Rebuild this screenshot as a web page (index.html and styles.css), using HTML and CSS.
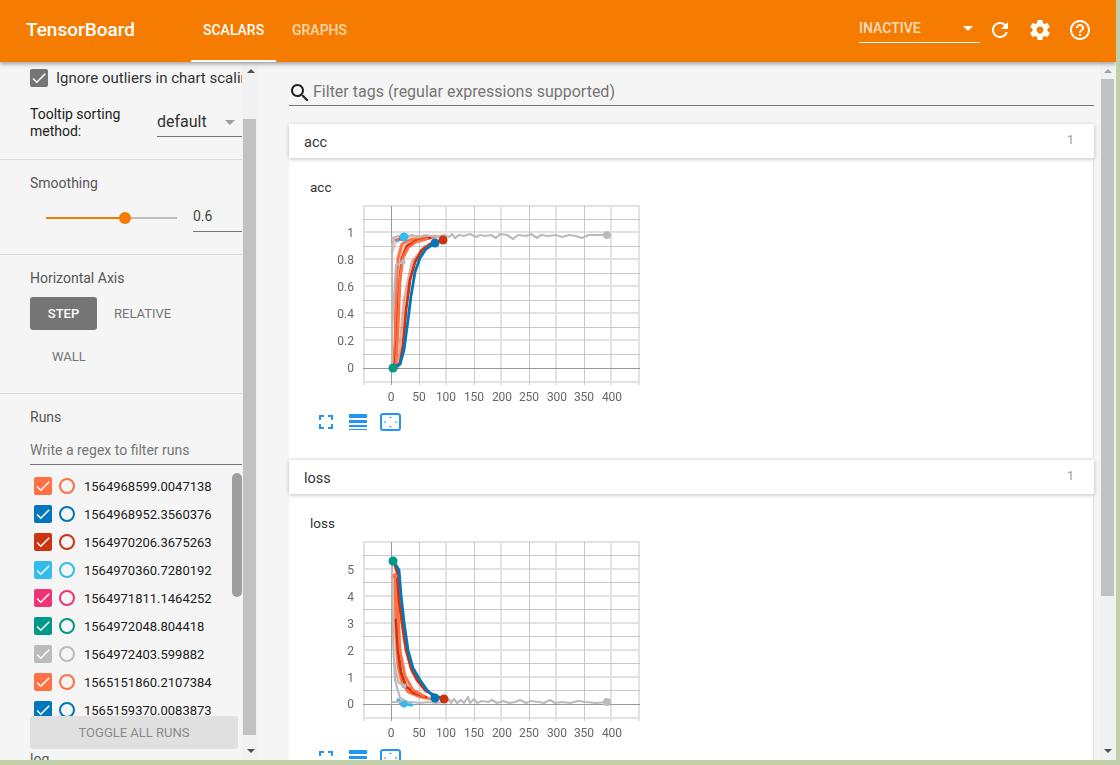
FILE: index.html
```html
<!DOCTYPE html>
<html lang="en">
<head>
<meta charset="utf-8">
<title>TensorBoard</title>
<link rel="stylesheet" href="styles.css">
</head>
<body>
<svg class="defs" width="0" height="0" aria-hidden="true">
  <symbol id="check" viewBox="0 0 24 24"><path d="M9 16.2L4.8 12l-1.4 1.4L9 19 21 7l-1.4-1.4z"/></symbol>
  <symbol id="fullscreen" viewBox="0 0 24 24"><path d="M7 14H5v5h5v-2H7v-3zm-2-4h2V7h3V5H5v5zm12 7h-3v2h5v-5h-2v3zM14 5v2h3v3h2V5h-5z"/></symbol>
  <symbol id="lines" viewBox="0 0 24 24"><path d="M3 4h18v4H3zM3 10h18v3H3zM3 15h18v2H3zM3 19h18v1H3z"/></symbol>
  <symbol id="fit" viewBox="0 0 24 24"><rect class="fit-box" x="3" y="4" width="19" height="16" rx="2"/><path class="fit-arrows" d="M12.500 6.500l1.500 1.500h-3zM12.500 17.500l1.500-1.500h-3zM6 12l1.500-1.500v3zM19 12l-1.500-1.500v3z"/></symbol>
</svg>
<div class="app">
  <header class="topbar">
    <div class="brand">TensorBoard</div>
    <nav class="tabs">
      <div class="tab active">SCALARS</div>
      <div class="tab">GRAPHS</div>
    </nav>
    <div class="spacer"></div>
    <div class="inactive"><span>INACTIVE</span><i class="caret caret-white"></i></div>
    <div class="top-icons">
      <svg class="top-icon" viewBox="0 0 24 24"><path d="M17.65 6.35C16.2 4.9 14.21 4 12 4c-4.42 0-7.99 3.58-7.99 8s3.57 8 7.99 8c3.73 0 6.84-2.55 7.73-6h-2.08c-.82 2.33-3.04 4-5.65 4-3.31 0-6-2.69-6-6s2.69-6 6-6c1.66 0 3.14.69 4.22 1.78L13 11h7V4l-2.35 2.35z"/></svg>
      <svg class="top-icon" viewBox="0 0 24 24"><path d="M19.43 12.98c.04-.32.07-.64.07-.98s-.03-.66-.07-.98l2.11-1.65c.19-.15.24-.42.12-.64l-2-3.46c-.12-.22-.39-.3-.61-.22l-2.49 1c-.52-.4-1.08-.73-1.69-.98l-.38-2.65C14.46 2.18 14.25 2 14 2h-4c-.25 0-.46.18-.49.42l-.38 2.65c-.61.25-1.17.59-1.69.98l-2.49-1c-.23-.09-.49 0-.61.22l-2 3.46c-.13.22-.07.49.12.64l2.11 1.65c-.04.32-.07.65-.07.98s.03.66.07.98l-2.11 1.65c-.19.15-.24.42-.12.64l2 3.46c.12.22.39.3.61.22l2.49-1c.52.4 1.08.73 1.69.98l.38 2.65c.03.24.24.42.49.42h4c.25 0 .46-.18.49-.42l.38-2.65c.61-.25 1.17-.59 1.69-.98l2.49 1c.23.09.49 0 .61-.22l2-3.46c.12-.22.07-.49-.12-.64l-2.11-1.65zM12 15.5c-1.93 0-3.5-1.57-3.5-3.5s1.57-3.5 3.5-3.5 3.5 1.57 3.5 3.5-1.57 3.5-3.5 3.5z"/></svg>
      <svg class="top-icon" viewBox="0 0 24 24"><path d="M11 18h2v-2h-2v2zm1-16C6.48 2 2 6.48 2 12s4.48 10 10 10 10-4.48 10-10S17.52 2 12 2zm0 18c-4.41 0-8-3.59-8-8s3.59-8 8-8 8 3.59 8 8-3.59 8-8 8zm0-14c-2.21 0-4 1.79-4 4h2c0-1.1.9-2 2-2s2 .9 2 2c0 2-3 1.75-3 5h2c0-2.25 3-2.5 3-5 0-2.21-1.79-4-4-4z"/></svg>
    </div>
  </header>

  <div class="workspace">
    <aside class="sidebar">
      <div class="side-content">
        <section class="side-section sec-options">
          <div class="ignore-row">
            <span class="box box-grey"><svg class="check"><use href="#check"/></svg></span>
            <span class="ignore-text">Ignore outliers in chart scaling</span>
          </div>
          <div class="tooltip-row">
            <div class="tooltip-label">Tooltip sorting method:</div>
            <div class="select"><span>default</span><i class="caret caret-grey"></i></div>
          </div>
        </section>
        <section class="side-section sec-smooth">
          <div class="side-label">Smoothing</div>
          <div class="smooth-row">
            <div class="slider"><div class="slider-fill"></div><div class="slider-knob"></div></div>
            <div class="smooth-value">0.6</div>
          </div>
        </section>
        <section class="side-section sec-axis">
          <div class="side-label">Horizontal Axis</div>
          <div class="axis-buttons">
            <div class="axis-btn selected">STEP</div>
            <div class="axis-btn">RELATIVE</div>
            <div class="axis-btn wall">WALL</div>
          </div>
        </section>
        <section class="sec-runs">
          <div class="side-label">Runs</div>
          <div class="regex">Write a regex to filter runs</div>
          <div class="run-list">
            <div class="run c-orange"><span class="box"><svg class="check"><use href="#check"/></svg></span><i class="ring"></i><span class="run-name">1564968599.0047138</span></div>
            <div class="run c-blue"><span class="box"><svg class="check"><use href="#check"/></svg></span><i class="ring"></i><span class="run-name">1564968952.3560376</span></div>
            <div class="run c-red"><span class="box"><svg class="check"><use href="#check"/></svg></span><i class="ring"></i><span class="run-name">1564970206.3675263</span></div>
            <div class="run c-cyan"><span class="box"><svg class="check"><use href="#check"/></svg></span><i class="ring"></i><span class="run-name">1564970360.7280192</span></div>
            <div class="run c-pink"><span class="box"><svg class="check"><use href="#check"/></svg></span><i class="ring"></i><span class="run-name">1564971811.1464252</span></div>
            <div class="run c-teal"><span class="box"><svg class="check"><use href="#check"/></svg></span><i class="ring"></i><span class="run-name">1564972048.804418</span></div>
            <div class="run c-grey"><span class="box"><svg class="check"><use href="#check"/></svg></span><i class="ring"></i><span class="run-name">1564972403.599882</span></div>
            <div class="run c-orange"><span class="box"><svg class="check"><use href="#check"/></svg></span><i class="ring"></i><span class="run-name">1565151860.2107384</span></div>
            <div class="run c-blue"><span class="box"><svg class="check"><use href="#check"/></svg></span><i class="ring"></i><span class="run-name">1565159370.0083873</span></div>
            <div class="list-thumb"></div>
          </div>
          <div class="toggle-btn">TOGGLE ALL RUNS</div>
          <div class="log-label">log</div>
        </section>
      </div>
      <div class="scrollbar side-scroll">
        <i class="arrow arrow-up arrow-dark"></i>
        <div class="thumb"></div>
        <i class="arrow arrow-down arrow-dark"></i>
      </div>
    </aside>

    <main class="main">
      <div class="main-content">
        <div class="filter">
          <svg class="search-icon" viewBox="0 0 24 24"><path d="M15.5 14h-.79l-.28-.27C15.41 12.59 16 11.11 16 9.5 16 5.910 13.090 3 9.500 3S3 5.910 3 9.500 5.910 16 9.500 16c1.610 0 3.090-.59 4.230-1.570l.27.28v.79l5 4.990L20.490 19l-4.990-5zm-6 0C7.010 14 5 11.990 5 9.500S7.010 5 9.500 5 14 7.010 14 9.500 11.990 14 9.500 14z"/></svg>
          <span>Filter tags (regular expressions supported)</span>
        </div>

        <section class="card">
          <div class="card-head"><span class="card-name">acc</span><span class="card-count">1</span></div>
          <div class="card-body">
            <div class="chart-title">acc</div>
            <svg class="chart" viewBox="320 200 340 210">
              <path class="g-light" d="M363 206H640M363 232H640M363 259H640M363 286H640M363 313H640M363 340H640M363 382H640M364 206V385M446 206V385M501 206V385M556 206V385M611 206V385M639 206V385"/>
              <path class="g-thin" d="M363 219.500H640M363 246.500H640M363 273.500H640M363 300.500H640M363 327.500H640M363 354.500H640M419.500 206V385M474.500 206V385M529.500 206V385M584.500 206V385"/>
              <path class="g-axis" d="M391.500 206V385M363 368.500H640"/>
              <path class="s-pink" d="M396 240L404 238"/>
              <path class="s-cyan" d="M397 241L404 237"/>
              <g class="faded">
                <path class="s-orange" d="M392 252L396 240 410 237 440 236M396 368L398 280 402 250 412 240"/>
                <path class="s-red" d="M398 368L404 300 412 262 425 246"/>
              </g>
              <path class="s-orange" d="M393 368L395 340 396 290 398 258 402 244 410 240 425 238 436 237"/>
              <path class="s-teal" d="M392 368L394 366"/>
              <path class="s-red" d="M395 366L397 340 399 290 402 258 407 246 416 241 430 238"/>
              <path class="s-orange" d="M394 366L396 364 398 330 400 280 403 258 408 248 416 242 427 239"/>
              <path class="s-red" d="M394 367L400 364 403 345 406 310 410 280 415 262 422 250 430 244 443 240"/>
              <path class="s-blue" d="M394 368L400 364 404 350 408 320 411 296 415 272 420 258 426 249 435 243"/>
              <path class="s-grey s-wide" d="M392 368L392 245 394 238"/>
              <path class="s-grey" d="M392 330L396 265 403 262M392 238L398 236 404 237 412 235 420 237 425 235 431 236 437 237 444 235 449 237 452 234 455 238 459 235 464 236 470 234 476 237 480 235 485 236 491 235 496 238 500 234 507 235 513 239 518 235 526 236 531 234 537 238 541 235 548 236 556 235 562 237 569 235 576 236 582 238 589 235 596 235 607 235"/>
              <circle class="d-pink" cx="402" cy="238" r="3"/>
              <circle class="d-cyan" cx="404" cy="237" r="4.500"/>
              <circle class="d-grey" cx="607" cy="235" r="4"/>
              <circle class="d-grey" cx="403" cy="262" r="2.500"/>
              <circle class="d-blue" cx="435" cy="243" r="4.500"/>
              <circle class="d-red" cx="443" cy="240" r="4.500"/>
              <circle class="d-teal" cx="393" cy="368" r="4.500"/>
              <g class="tick y-tick">
                <text x="354" y="237">1</text><text x="354" y="264">0.8</text><text x="354" y="291">0.6</text><text x="354" y="318">0.4</text><text x="354" y="345">0.2</text><text x="354" y="372">0</text>
              </g>
              <g class="tick x-tick">
                <text x="391" y="401">0</text><text x="419" y="401">50</text><text x="446" y="401">100</text><text x="474" y="401">150</text><text x="502" y="401">200</text><text x="529" y="401">250</text><text x="557" y="401">300</text><text x="584" y="401">350</text><text x="612" y="401">400</text>
              </g>
            </svg>
            <div class="chart-tools">
              <svg class="tool"><use href="#fullscreen"/></svg>
              <svg class="tool"><use href="#lines"/></svg>
              <svg class="tool"><use href="#fit"/></svg>
            </div>
          </div>
        </section>

        <section class="card">
          <div class="card-head"><span class="card-name">loss</span><span class="card-count">1</span></div>
          <div class="card-body">
            <div class="chart-title">loss</div>
            <svg class="chart" viewBox="320 536 340 210">
              <path class="g-light" d="M363 542H640M363 569H640M363 596H640M363 623H640M363 650H640M363 677H640M363 718H640M364 542V721M446 542V721M501 542V721M556 542V721M611 542V721M639 542V721"/>
              <path class="g-thin" d="M363 555.500H640M363 582.500H640M363 609.500H640M363 636.500H640M363 663.500H640M363 690.500H640M419.500 542V721M474.500 542V721M529.500 542V721M584.500 542V721"/>
              <path class="g-axis" d="M391.500 542V721M363 704.500H640"/>
              <path class="s-pink" d="M398 700L402 705"/>
              <path class="s-cyan" d="M398 700L404 704 412 705"/>
              <g class="faded">
                <path class="s-orange" d="M392 575L396 650 400 680 410 693 430 698 450 700"/>
                <path class="s-red" d="M398 590L404 640 412 672 425 690"/>
              </g>
              <path class="s-orange" d="M395 575L396 630 398 665 402 682 408 692 420 697 435 700"/>
              <path class="s-red" d="M396 620L398 650 401 672 406 686 414 693 426 697"/>
              <path class="s-orange" d="M396 575L398 610 400 650 405 676 413 690 424 696"/>
              <path class="s-red" d="M394 562L397 572 399 600 402 622 406 650 411 668 417 680 426 691 436 696 444 699"/>
              <path class="s-blue" d="M394 562L399 570 401 595 404 622 408 650 413 668 420 680 427 690 435 698"/>
              <path class="s-grey s-wide" d="M392 561L393 640 395 680 400 698 408 702"/>
              <path class="s-grey" d="M394 660L398 682 404 686M392 702L400 702 412 702 420 703 428 702 436 703 444 702 449 700 451 703 454 699 457 703 461 700 464 703 468 697 470 703 474 699 477 703 482 701 488 702 492 700 497 703 503 701 509 703 515 702 520 700 526 703 531 701 539 702 544 703 550 700 555 703 562 702 570 703 578 701 586 702 596 703 607 702"/>
              <circle class="d-orange" cx="395" cy="576" r="2.500"/>
              <circle class="d-cyan" cx="404" cy="704" r="3.500"/>
              <circle class="d-grey" cx="607" cy="702" r="4"/>
              <circle class="d-grey" cx="404" cy="686" r="2.500"/>
              <circle class="d-blue" cx="435" cy="698" r="4.500"/>
              <circle class="d-red" cx="444" cy="699" r="4.500"/>
              <circle class="d-teal" cx="393" cy="561" r="4.500"/>
              <g class="tick y-tick">
                <text x="354" y="574">5</text><text x="354" y="601">4</text><text x="354" y="628">3</text><text x="354" y="655">2</text><text x="354" y="682">1</text><text x="354" y="708">0</text>
              </g>
              <g class="tick x-tick">
                <text x="391" y="737">0</text><text x="419" y="737">50</text><text x="446" y="737">100</text><text x="474" y="737">150</text><text x="502" y="737">200</text><text x="529" y="737">250</text><text x="557" y="737">300</text><text x="584" y="737">350</text><text x="612" y="737">400</text>
              </g>
            </svg>
            <div class="chart-tools">
              <svg class="tool"><use href="#fullscreen"/></svg>
              <svg class="tool"><use href="#lines"/></svg>
              <svg class="tool"><use href="#fit"/></svg>
            </div>
          </div>
        </section>
      </div>
      <div class="scrollbar main-scroll">
        <i class="arrow arrow-up arrow-soft"></i>
        <div class="thumb"></div>
        <i class="arrow arrow-down arrow-dark"></i>
      </div>
    </main>
  </div>
</div>
</body>
</html>
```

FILE: styles.css
```css
* { box-sizing: border-box; }
html, body { margin: 0; padding: 0; height: 100%; }
body {
  background: #c3cfa9;
  font-family: Roboto, "Liberation Sans", sans-serif;
  overflow: hidden;
}
.defs { position: absolute; }
.app {
  width: 1116px;
  height: 760px;
  display: flex;
  flex-direction: column;
  overflow: hidden;
  background: #f5f5f5;
}

/* top bar */
.topbar {
  flex: none;
  height: 62px;
  background: #f57c00;
  color: #fff;
  display: flex;
  align-items: stretch;
  position: relative;
  z-index: 2;
  box-shadow: 0 2px 4px rgba(0, 0, 0, .35);
}
.brand {
  width: 191px;
  padding-left: 26px;
  font-size: 19px;
  font-weight: 500;
  line-height: 60px;
}
.tabs { display: flex; }
.tab {
  padding: 0 12px;
  margin-right: 4px;
  font-size: 14px;
  font-weight: 500;
  line-height: 60px;
  color: rgba(255, 255, 255, .7);
}
.tab.active {
  color: #fff;
  border-bottom: 2px solid #fff;
  width: 85px;
  text-align: center;
}
.spacer { flex: 1; }
.inactive {
  width: 121px;
  height: 27px;
  margin-top: 16px;
  border-bottom: 1px solid #fff;
  display: flex;
  align-items: center;
  justify-content: space-between;
  padding: 0 7px 2px 0;
  font-size: 14px;
  font-weight: 500;
  color: rgba(255, 255, 255, .75);
}
.caret { display: block; width: 0; height: 0; border-left: 5px solid transparent; border-right: 5px solid transparent; }
.caret-white { border-top: 5px solid #fff; }
.caret-grey { border-top: 5px solid #9e9e9e; margin-top: 2px; }
.top-icons { display: flex; gap: 16px; padding: 18px 24px 0 8px; }
.top-icon { width: 24px; height: 24px; fill: #fff; }

.workspace { flex: 1; display: flex; min-height: 0; }

/* sidebar */
.sidebar { flex: none; width: 259px; display: flex; }
.side-content { width: 242px; height: 698px; overflow: hidden; }
.side-section { border-bottom: 1px solid #dcdcdc; padding-left: 30px; }
.sec-options { height: 98px; padding-top: 7px; }
.ignore-row { display: flex; align-items: center; height: 18px; white-space: nowrap; }
.box {
  flex: none;
  width: 18px;
  height: 18px;
  border-radius: 2px;
  display: flex;
  align-items: center;
  justify-content: center;
}
.box-grey { background: #757575; }
.check { width: 18px; height: 18px; fill: #fff; }
.ignore-text { margin-left: 8px; font-size: 15px; color: #333; }
.tooltip-row { display: flex; margin-top: 19px; }
.tooltip-label { width: 127px; padding-right: 30px; font-size: 14px; line-height: 17px; color: #212121; }
.select {
  flex: 1;
  height: 30px;
  margin-top: 1px;
  border-bottom: 1px solid #757575;
  display: flex;
  align-items: center;
  justify-content: space-between;
  padding-right: 7px;
  font-size: 16px;
  color: #333;
}
.sec-smooth { height: 95px; padding-top: 15px; }
.side-label { font-size: 14px; line-height: 16px; color: #555; }
.smooth-row { display: flex; margin-top: 10px; }
.slider { width: 131px; height: 2px; margin: 16px 0 0 16px; background: #bdbdbd; position: relative; }
.slider-fill { width: 79px; height: 2px; background: #f57c00; }
.slider-knob {
  position: absolute;
  left: 73px;
  top: -5px;
  width: 12px;
  height: 12px;
  border-radius: 50%;
  background: #f57c00;
}
.smooth-value {
  flex: 1;
  margin-left: 16px;
  height: 31px;
  border-bottom: 1px solid #757575;
  font-size: 14px;
  line-height: 30px;
  color: #444;
}
.sec-axis { height: 139px; padding-top: 15px; }
.axis-buttons { display: flex; flex-wrap: wrap; margin-top: 11px; }
.axis-btn {
  height: 33px;
  padding: 0 17px;
  font-size: 13px;
  line-height: 33px;
  color: #757575;
}
.axis-btn.selected { width: 67px; padding: 0; text-align: center; background: #757575; color: #fff; font-weight: 500; border-radius: 3px; }
.axis-btn.wall { margin: 10px 0 0 5px; }
.sec-runs { padding: 15px 0 0 30px; }
.regex {
  margin-top: 9px;
  height: 31px;
  border-bottom: 1px solid #757575;
  font-size: 14px;
  line-height: 32px;
  color: #757575;
}
.run-list { height: 244px; margin-top: 7px; overflow: hidden; position: relative; }
.run { height: 28px; display: flex; align-items: center; padding-left: 4px; }
.run-name { margin-left: 9px; font-size: 13px; color: #212121; white-space: nowrap; }
.ring { flex: none; width: 16px; height: 16px; margin-left: 7px; border: 2px solid; border-radius: 50%; }
.c-orange .box { background: #ff7043; } .c-orange .ring { border-color: #ff7043; }
.c-blue .box { background: #0077bb; } .c-blue .ring { border-color: #0077bb; }
.c-red .box { background: #cc3311; } .c-red .ring { border-color: #cc3311; }
.c-cyan .box { background: #33bbee; } .c-cyan .ring { border-color: #33bbee; }
.c-pink .box { background: #ee3377; } .c-pink .ring { border-color: #ee3377; }
.c-teal .box { background: #009988; } .c-teal .ring { border-color: #009988; }
.c-grey .box { background: #bbbbbb; } .c-grey .ring { border-color: #bbbbbb; }
.list-thumb {
  position: absolute;
  right: 0;
  top: 1px;
  width: 10px;
  height: 124px;
  border-radius: 5px;
  background: #9e9e9e;
}
.toggle-btn {
  width: 208px;
  height: 33px;
  background: #e0e0e0;
  border-radius: 3px;
  color: #8a8a8a;
  font-size: 13px;
  line-height: 33px;
  text-align: center;
}
.log-label { margin-top: 2px; font-size: 14px; color: #555; }

/* scrollbars */
.scrollbar {
  flex: none;
  display: flex;
  flex-direction: column;
  align-items: center;
  background: #f1f1f1;
  position: relative;
}
.side-scroll { width: 17px; }
.side-scroll .thumb { width: 13px; height: 616px; margin-top: 46px; margin-right: 2px; background: #c1c1c1; }
.main-scroll { width: 16px; }
.main-scroll .thumb { width: 13px; height: 517px; margin-top: 6px; margin-right: 1px; background: #c1c1c1; }
.arrow { display: block; width: 0; height: 0; border-left: 4px solid transparent; border-right: 4px solid transparent; }
.arrow-up { margin-top: 7px; }
.arrow-down { position: absolute; bottom: 7px; }
.arrow-up.arrow-dark { border-bottom: 4px solid #505050; }
.arrow-up.arrow-soft { border-bottom: 4px solid #a3a3a3; }
.arrow-down.arrow-dark { border-top: 4px solid #505050; }

/* main */
.main { flex: 1; min-width: 0; display: flex; }
.main-content { flex: 1; min-width: 0; padding: 0 6px 0 30px; overflow: hidden; background: #f5f5f5; }
.filter {
  height: 44px;
  margin-bottom: 18px;
  border-bottom: 1px solid #757575;
  display: flex;
  align-items: flex-end;
  font-size: 16px;
  color: #757575;
  white-space: nowrap;
}
.search-icon { width: 24px; height: 24px; margin-left: -1px; fill: #212121; }
.filter span { line-height: 24px; margin: 0 0 1px 1px; }
.card { height: 336px; }
.card-head {
  height: 34px;
  background: #fff;
  box-shadow: 0 1px 4px rgba(0, 0, 0, .25);
  display: flex;
  align-items: center;
  justify-content: space-between;
  padding: 2px 20px 0 15px;
  position: relative;
}
.card-name { font-size: 14.500px; color: #333; }
.card-count { font-size: 12px; color: #999; margin-top: -5px; }
.card-body { height: 300px; background: #fff; border-right: 1px solid #e0e0e0; padding: 21px 0 0 21px; }
.chart-title { font-size: 13.500px; line-height: 16px; color: #333; }
.chart { display: block; width: 340px; height: 210px; margin: 5px 0 0 10px; filter: blur(.35px); }
.g-light { stroke: #e2e2e2; stroke-width: 2; fill: none; }
.g-thin { stroke: #c8c8c8; stroke-width: 1; fill: none; }
.g-axis { stroke: #999; stroke-width: 1; fill: none; }
.chart path[class^="s-"] { fill: none; stroke-width: 2.800; stroke-linejoin: round; stroke-linecap: round; }
.chart path.s-wide { stroke-width: 3; }
.chart path.s-grey { stroke-width: 2.200; }
.faded { opacity: .4; }
.s-grey { stroke: #bbb; }
.s-orange { stroke: #ff7043; }
.s-red { stroke: #cc3311; }
.s-blue { stroke: #0077bb; }
.s-cyan { stroke: #33bbee; }
.s-pink { stroke: #ee3377; }
.s-teal { stroke: #009988; }
.d-grey { fill: #bbb; }
.d-orange { fill: #ff7043; }
.d-red { fill: #cc3311; }
.d-blue { fill: #0077bb; }
.d-cyan { fill: #33bbee; }
.d-pink { fill: #ee3377; }
.d-teal { fill: #009988; }
.tick text { font-family: Roboto, "Liberation Sans", sans-serif; font-size: 12px; fill: #666; }
.y-tick text { text-anchor: end; }
.x-tick text { text-anchor: middle; }
.chart-tools { display: flex; gap: 8px; margin-left: 4px; }
.tool { width: 24px; height: 24px; fill: #2196f3; }
.fit-box { fill: none; stroke: #2196f3; stroke-width: 2; }
.fit-arrows { fill: #2196f3; }
```
